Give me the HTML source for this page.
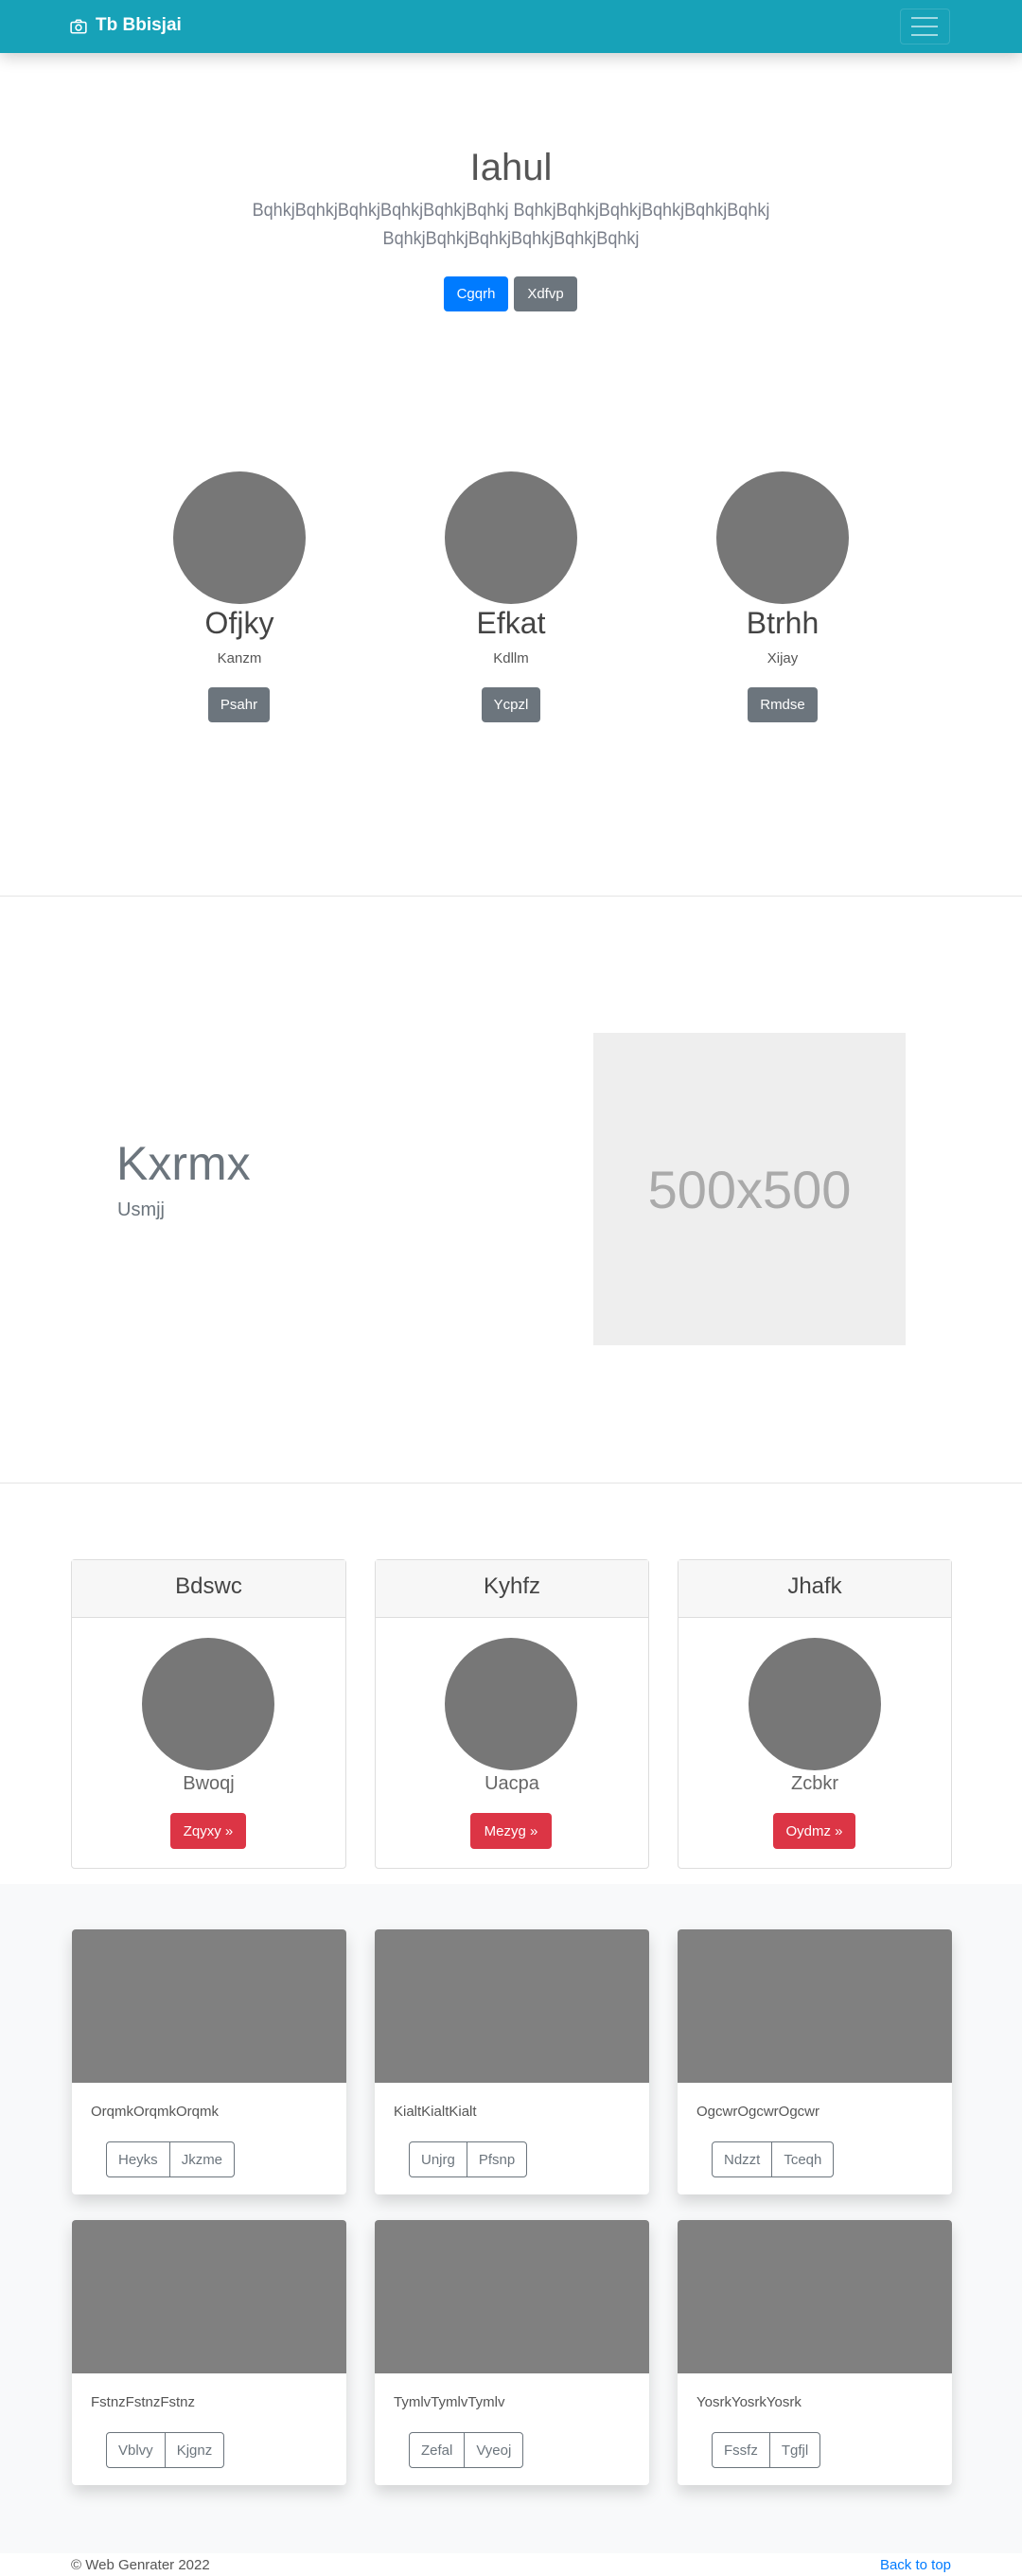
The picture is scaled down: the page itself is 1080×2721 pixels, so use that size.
<!DOCTYPE html>
<html><head><meta charset="utf-8"><style>
*{box-sizing:border-box;margin:0;padding:0}
body{width:1080px;height:2721px;position:relative;font-family:"Liberation Sans",sans-serif;background:#fff;color:#212529;overflow:hidden}
.a{position:absolute}
.c{text-align:center}
.btn{position:absolute;color:#fff;border-radius:4px;font-size:15px;display:flex;align-items:center;justify-content:center}
.circ{position:absolute;width:140px;height:140px;border-radius:50%;background:#777}
.card{position:absolute;border:1px solid #ddd;border-radius:4px;background:#fff}
.pc{position:absolute;width:290px;height:280px;background:#fff;border-radius:4px;box-shadow:0 8px 16px rgba(0,0,0,.15);overflow:hidden}
.pc .img{height:162px;background:#808080}
.pc .t{position:absolute;left:20px;top:184px;font-size:15px;color:#555}
.bg{position:absolute;left:36px;top:224px;height:38px;display:flex;border:1px solid #6c757d;border-radius:4px;color:#6c757d;font-size:15px}
.bg span{padding:0 12px;display:flex;align-items:center}
.bg span+span{border-left:1px solid #6c757d}
.ln{position:absolute;left:0;width:1080px;text-align:center;white-space:nowrap;font-size:19px;color:#7a7f8a;transform:scaleX(0.95)}
</style></head><body>
<div class="a" style="left:0;top:0;width:1080px;height:56px;background:#17a2b8;box-shadow:0 4px 16px rgba(0,0,0,.2)"></div>
<svg class="a" style="left:74px;top:19px" width="18" height="18" viewBox="0 0 16 16" fill="none" stroke="#fff" stroke-width="1.4"><rect x="1" y="4" width="14" height="10" rx="1.5"/><path d="M5 4l1.2-2h3.6L11 4"/><circle cx="8" cy="9" r="2.6"/></svg>
<div class="a" style="left:101px;top:16px;font-size:19px;font-weight:bold;color:#fff">Tb Bbisjai</div>
<div class="a" style="left:951px;top:9px;width:53px;height:38px;border:1px solid rgba(255,255,255,.15);border-radius:4px"></div>
<div class="a" style="left:963px;top:18px;width:28px;height:20px;border-top:2px solid rgba(255,255,255,.6);border-bottom:2px solid rgba(255,255,255,.6)"><div style="margin-top:7px;height:2px;background:rgba(255,255,255,.6)"></div></div>

<div class="a c" style="left:0;width:1080px;top:155px;font-size:40px;font-weight:300;color:#555">Iahul</div>
<div class="ln" style="top:212px">BqhkjBqhkjBqhkjBqhkjBqhkjBqhkj BqhkjBqhkjBqhkjBqhkjBqhkjBqhkj</div>
<div class="ln" style="top:242px">BqhkjBqhkjBqhkjBqhkjBqhkjBqhkj</div>
<div class="btn" style="left:469px;top:292px;width:68px;height:37px;background:#007bff">Cgqrh</div>
<div class="btn" style="left:543px;top:292px;width:67px;height:37px;background:#6c757d">Xdfvp</div>

<div class="circ" style="left:183px;top:498px"></div>
<div class="circ" style="left:470px;top:498px"></div>
<div class="circ" style="left:757px;top:498px"></div>
<div class="a c" style="left:103px;width:300px;top:640px;font-size:32px;color:#444">Ofjky</div>
<div class="a c" style="left:390px;width:300px;top:640px;font-size:32px;color:#444">Efkat</div>
<div class="a c" style="left:677px;width:300px;top:640px;font-size:32px;color:#444">Btrhh</div>
<div class="a c" style="left:103px;width:300px;top:687px;font-size:15px;color:#555">Kanzm</div>
<div class="a c" style="left:390px;width:300px;top:687px;font-size:15px;color:#555">Kdllm</div>
<div class="a c" style="left:677px;width:300px;top:687px;font-size:15px;color:#555">Xijay</div>
<div class="btn" style="left:220px;top:726px;width:65px;height:37px;background:#6c757d">Psahr</div>
<div class="btn" style="left:509px;top:726px;width:62px;height:37px;background:#6c757d">Ycpzl</div>
<div class="btn" style="left:790px;top:726px;width:74px;height:37px;background:#6c757d">Rmdse</div>
<div class="a" style="left:0;top:946px;width:1080px;height:1px;background:#e5e5e5"></div>

<div class="a" style="left:123px;top:1200px;font-size:50px;font-weight:300;color:#6c757d">Kxrmx</div>
<div class="a" style="left:124px;top:1267px;font-size:20px;font-weight:300;color:#6c757d">Usmjj</div>
<div class="a" style="left:627px;top:1091px;width:330px;height:330px;background:#eee;color:#aaa;font-size:56px;display:flex;align-items:center;justify-content:center">500x500</div>
<div class="a" style="left:0;top:1566px;width:1080px;height:1px;background:#e5e5e5"></div>

<div class="card" style="left:75px;top:1647px;width:291px;height:327px"></div>
<div class="card" style="left:396px;top:1647px;width:290px;height:327px"></div>
<div class="card" style="left:716px;top:1647px;width:290px;height:327px"></div>
<div class="a" style="left:76px;top:1648px;width:289px;height:61px;background:#f7f7f7;border-bottom:1px solid #ddd"></div>
<div class="a" style="left:397px;top:1648px;width:288px;height:61px;background:#f7f7f7;border-bottom:1px solid #ddd"></div>
<div class="a" style="left:717px;top:1648px;width:288px;height:61px;background:#f7f7f7;border-bottom:1px solid #ddd"></div>
<div class="a c" style="left:75px;width:291px;top:1662px;font-size:24px;color:#444">Bdswc</div>
<div class="a c" style="left:396px;width:290px;top:1662px;font-size:24px;color:#444">Kyhfz</div>
<div class="a c" style="left:716px;width:290px;top:1662px;font-size:24px;color:#444">Jhafk</div>
<div class="circ" style="left:150px;top:1730px"></div>
<div class="circ" style="left:470px;top:1730px"></div>
<div class="circ" style="left:791px;top:1730px"></div>
<div class="a c" style="left:75px;width:291px;top:1873px;font-size:20px;font-weight:300;color:#666">Bwoqj</div>
<div class="a c" style="left:396px;width:290px;top:1873px;font-size:20px;font-weight:300;color:#666">Uacpa</div>
<div class="a c" style="left:716px;width:290px;top:1873px;font-size:20px;font-weight:300;color:#666">Zcbkr</div>
<div class="btn" style="left:180px;top:1915px;width:80px;height:38px;background:#dc3545">Zqyxy »</div>
<div class="btn" style="left:497px;top:1915px;width:86px;height:38px;background:#dc3545">Mezyg »</div>
<div class="btn" style="left:817px;top:1915px;width:87px;height:38px;background:#dc3545">Oydmz »</div>

<div class="a" style="left:0;top:1990px;width:1080px;height:707px;background:#f8f9fa"></div>
<div class="pc" style="left:76px;top:2038px"><div class="img"></div><div class="t">OrqmkOrqmkOrqmk</div><div class="bg"><span>Heyks</span><span>Jkzme</span></div></div>
<div class="pc" style="left:396px;top:2038px"><div class="img"></div><div class="t">KialtKialtKialt</div><div class="bg"><span>Unjrg</span><span>Pfsnp</span></div></div>
<div class="pc" style="left:716px;top:2038px"><div class="img"></div><div class="t">OgcwrOgcwrOgcwr</div><div class="bg"><span>Ndzzt</span><span>Tceqh</span></div></div>
<div class="pc" style="left:76px;top:2345px"><div class="img"></div><div class="t">FstnzFstnzFstnz</div><div class="bg"><span>Vblvy</span><span>Kjgnz</span></div></div>
<div class="pc" style="left:396px;top:2345px"><div class="img"></div><div class="t">TymlvTymlvTymlv</div><div class="bg"><span>Zefal</span><span>Vyeoj</span></div></div>
<div class="pc" style="left:716px;top:2345px"><div class="img"></div><div class="t">YosrkYosrkYosrk</div><div class="bg"><span>Fssfz</span><span>Tgfjl</span></div></div>

<div class="a" style="left:75px;top:2701px;font-size:15px;color:#555">© Web Genrater 2022</div>
<div class="a" style="right:75px;top:2701px;font-size:15px;color:#007bff">Back to top</div>
</body></html>
